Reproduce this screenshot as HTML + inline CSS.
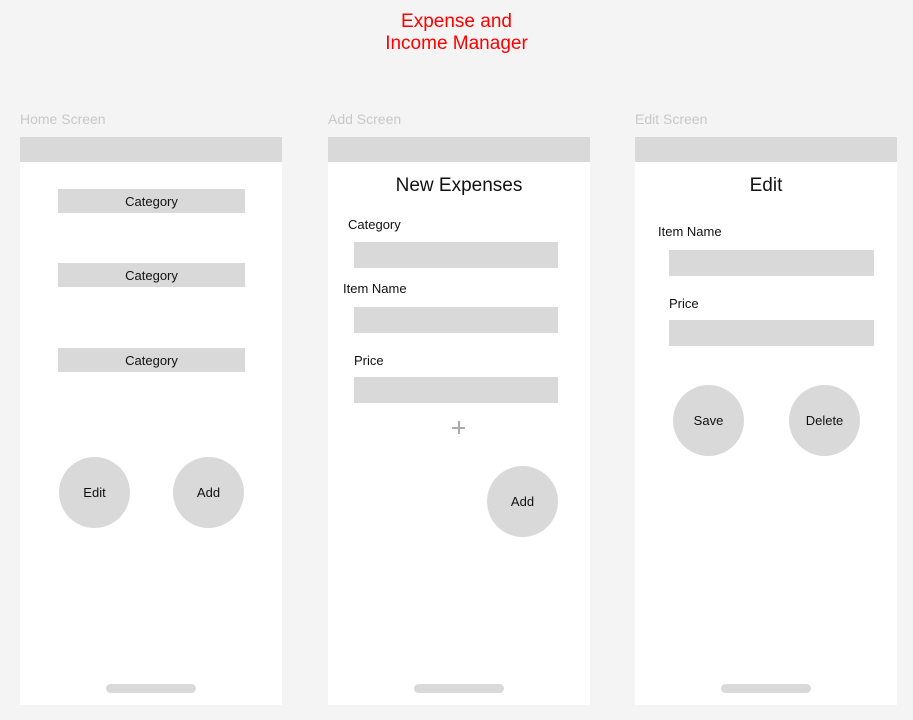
<!DOCTYPE html>
<html><head><style>
body{margin:0;width:913px;height:720px;background:#f4f4f4;position:relative;overflow:hidden;font-family:"Liberation Sans",Arial,sans-serif;}
.a{position:absolute}
.t{position:absolute;white-space:nowrap;font-size:13px;color:#111}
.frame{position:absolute;top:137px;width:262px;height:568px;background:#fff}
.bar{position:absolute;left:0;top:0;width:262px;height:25px;background:#d9d9d9}
.g{position:absolute;background:#d9d9d9}
.c{position:absolute;background:#d9d9d9;border-radius:50%;display:flex;align-items:center;justify-content:center;font-size:13px;color:#111}
.cat{position:absolute;background:#d9d9d9;display:flex;align-items:center;justify-content:center;font-size:13px;color:#111}
.ind{position:absolute;left:86px;top:547px;width:90px;height:9px;border-radius:5px;background:#d9d9d9}
.lbl{position:absolute;top:111px;font-size:14px;color:#c8c8c8}
</style></head><body>
<div class="a" style="left:0;width:913px;top:11px;text-align:center;color:#f00;font-size:19px;line-height:22px">Expense and<br>Income Manager</div>
<div class="lbl" style="left:20px">Home Screen</div>
<div class="lbl" style="left:328px">Add Screen</div>
<div class="lbl" style="left:635px">Edit Screen</div>

<div class="frame" style="left:20px"><div class="bar"></div>
<div class="cat" style="left:38px;top:52px;width:187px;height:24px">Category</div>
<div class="cat" style="left:38px;top:126px;width:187px;height:24px">Category</div>
<div class="cat" style="left:38px;top:211px;width:187px;height:24px">Category</div>
<div class="c" style="left:39px;top:320px;width:71px;height:71px">Edit</div>
<div class="c" style="left:153px;top:320px;width:71px;height:71px">Add</div>
<div class="ind"></div></div>

<div class="frame" style="left:328px"><div class="bar"></div>
<div class="a" style="left:0;width:262px;top:38px;text-align:center;font-size:19px;color:#111">New Expenses</div>
<div class="t" style="left:20px;top:80px">Category</div>
<div class="g" style="left:26px;top:105px;width:204px;height:26px"></div>
<div class="t" style="left:15px;top:144px">Item Name</div>
<div class="g" style="left:26px;top:170px;width:204px;height:26px"></div>
<div class="t" style="left:26px;top:216px">Price</div>
<div class="g" style="left:26px;top:240px;width:204px;height:26px"></div>
<div class="a" style="left:124px;top:290px;width:13px;height:1.5px;background:#aaa"></div>
<div class="a" style="left:130px;top:284px;width:1.5px;height:13px;background:#aaa"></div>
<div class="c" style="left:159px;top:329px;width:71px;height:71px">Add</div>
<div class="ind"></div></div>

<div class="frame" style="left:635px"><div class="bar"></div>
<div class="a" style="left:0;width:262px;top:38px;text-align:center;font-size:19px;color:#111">Edit</div>
<div class="t" style="left:23px;top:87px">Item Name</div>
<div class="g" style="left:34px;top:113px;width:205px;height:26px"></div>
<div class="t" style="left:34px;top:159px">Price</div>
<div class="g" style="left:34px;top:183px;width:205px;height:26px"></div>
<div class="c" style="left:38px;top:248px;width:71px;height:71px">Save</div>
<div class="c" style="left:154px;top:248px;width:71px;height:71px">Delete</div>
<div class="ind"></div></div>
</body></html>
